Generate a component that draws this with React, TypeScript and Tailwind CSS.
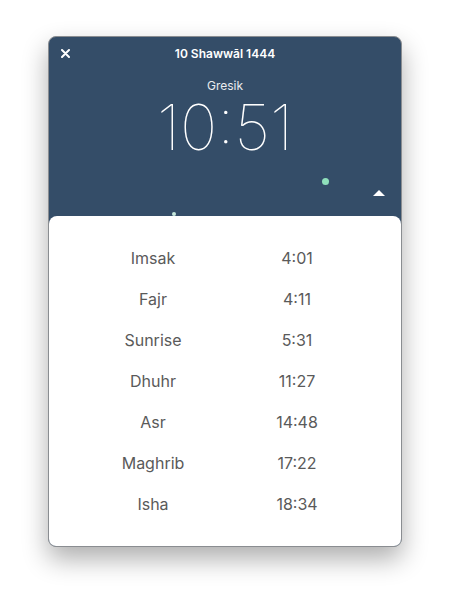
const times = [
  { name: "Imsak", time: "4:01" },
  { name: "Fajr", time: "4:11" },
  { name: "Sunrise", time: "5:31" },
  { name: "Dhuhr", time: "11:27" },
  { name: "Asr", time: "14:48" },
  { name: "Maghrib", time: "17:22" },
  { name: "Isha", time: "18:34" },
];

export default function App() {
  return (
    <div
      className="h-[608px] w-[450px] bg-white pl-[48px] pt-[36px]"
      style={{ fontFamily: "Inter, 'Noto Sans', sans-serif" }}
    >
      <div className="flex h-[511px] w-[354px] flex-col overflow-hidden rounded-[8px] border border-[#8a8d91] bg-[#344d68] shadow-[0_12px_26px_rgba(0,0,0,0.32)]">
        {/* header */}
        <div className="relative flex h-[179px] flex-col items-center">
          <button className="absolute left-[10px] top-[10px] flex h-[12px] w-[12px] items-center justify-center text-white">
            <svg width="9" height="9" viewBox="0 0 9 9">
              <path d="M1 1L8 8M8 1L1 8" stroke="white" strokeWidth="2" strokeLinecap="round" />
            </svg>
          </button>
          <div className="mt-[9px] text-[12px] font-semibold leading-[15px] text-white">10 Shawwāl 1444</div>
          <div className="mt-[17px] text-[12px] leading-[15px] text-white/90">Gresik</div>
          <div className="mt-[3px] text-[63px] font-thin leading-[62px] text-white">10:51</div>
          <div className="absolute left-[273px] top-[141px] h-[7px] w-[7px] rounded-full bg-[#8fe0bb]" />
          <div className="absolute left-[324px] top-[153px] h-0 w-0 border-x-[6px] border-b-[6px] border-x-transparent border-b-white" />
          <div className="absolute left-[123px] top-[175px] h-[4px] w-[4px] rounded-full bg-[#c6e8dc]" />
        </div>
        {/* prayer list */}
        <div className="grid flex-1 grid-cols-2 content-center rounded-t-[8px] bg-white px-8 py-[21px] text-center text-[16px] text-[#5a5a5a]">
          {times.map((t) => (
            <div key={t.name} className="contents">
              <div className="leading-[41px]">{t.name}</div>
              <div className="leading-[41px]">{t.time}</div>
            </div>
          ))}
        </div>
      </div>
    </div>
  );
}
